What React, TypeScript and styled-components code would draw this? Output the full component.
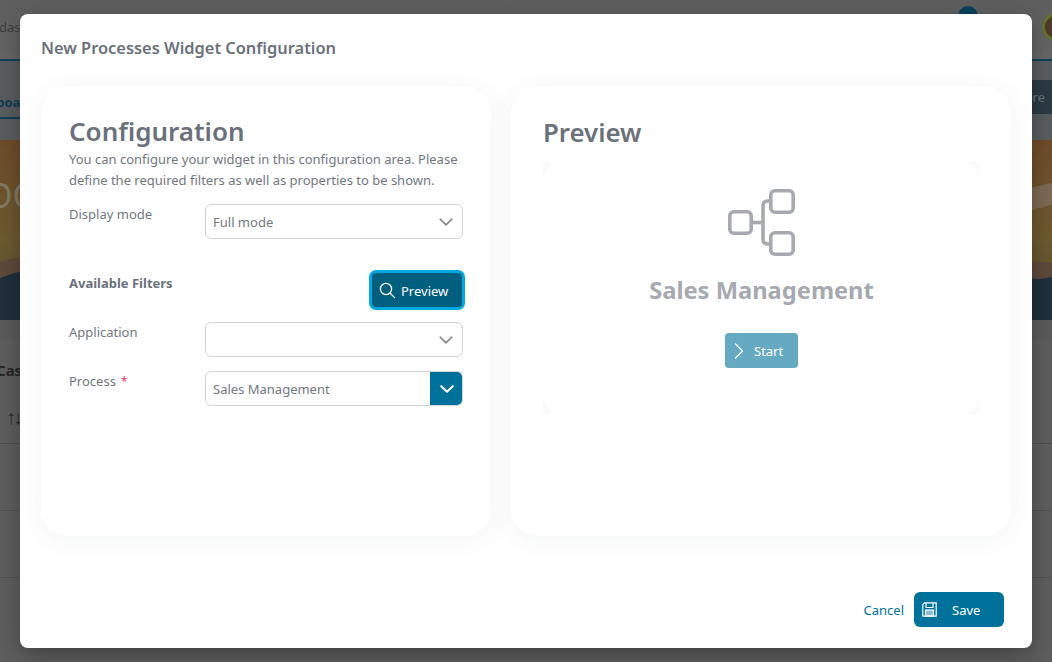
import React from 'react';
import styled, { createGlobalStyle } from 'styled-components';

const GlobalStyle = createGlobalStyle`
  html, body {
    margin: 0;
    padding: 0;
    height: 100%;
    overflow: hidden;
    font-family: "Noto Sans", "Open Sans", sans-serif;
  }
  * { box-sizing: border-box; }
`;

const Screen = styled.div`
  position: relative;
  width: 1052px;
  height: 662px;
  overflow: hidden;
  background: #5b5b5b;
`;

/* page behind the dialog */
const Page = styled.div`
  display: flex;
  flex-direction: column;
  height: 100%;
`;

const TopBar = styled.div`
  display: flex;
  align-items: center;
  justify-content: space-between;
  height: 61px;
  padding-bottom: 6px;
  background: linear-gradient(to bottom, #5e5e5e, #666);
  border-bottom: 2px solid #0d4256;
  overflow: hidden;
`;

const Crumb = styled.span`
  margin-left: -1px;
  font-size: 13px;
  color: #3e3e3e;
`;

const TopRight = styled.div`
  display: flex;
  align-items: center;
  gap: 64px;
  margin-right: -18px;
`;

const Badge = styled.span`
  width: 20px;
  height: 20px;
  margin-bottom: 22px;
  border-radius: 50%;
  background: #0a4258;
`;

const Avatar = styled.span`
  width: 28px;
  height: 28px;
  border-radius: 50%;
  border: 3px solid #66702c;
  background: #4f3a2c;
`;

const TabRow = styled.div`
  display: flex;
  align-items: center;
  justify-content: space-between;
  height: 79px;
  background: #5a5d5f;
  padding-top: 3px;
`;

const ActiveTab = styled.span`
  margin-left: -36px;
  padding: 8px 0 6px;
  border-bottom: 2px solid #0d4256;
  font-size: 13px;
  font-weight: 700;
  color: #0f3f52;
`;

const MoreButton = styled.span`
  display: flex;
  align-items: center;
  height: 34px;
  padding: 0 7px 0 12px;
  margin-top: -10px;
  background: #2b3a43;
  font-size: 13px;
  color: #6d7679;
`;

const Banner = styled.div`
  position: relative;
  height: 180px;
  background: linear-gradient(to bottom, #6f4c2a 0%, #6d5a30 55%, #63542f 75%);
  overflow: hidden;
`;

const BannerArt = styled.svg`
  display: block;
  width: 100%;
  height: 100%;
`;

const BannerTitle = styled.span`
  position: absolute;
  left: -14px;
  top: 32px;
  font-size: 34px;
  color: #827a63;
`;

const CaseArea = styled.div`
  flex: 1;
  margin-top: 20px;
  background: #5e5e5e;
  display: flex;
  flex-direction: column;
`;

const CaseTitle = styled.div`
  height: 62px;
  padding-top: 20px;
  margin-left: -4px;
  font-size: 15px;
  font-weight: 700;
  color: #262626;
`;

const SortRow = styled.div`
  height: 42px;
  padding: 1px 0 0 6px;
  font-size: 20px;
  letter-spacing: -3px;
  color: #2c2c2c;
  border-bottom: 1px solid #4f4f4f;
`;

const BlankRow = styled.div`
  height: 67px;
  border-bottom: 1px solid #535353;
`;

/* dialog */
const Dialog = styled.div`
  position: absolute;
  left: 20px;
  top: 14px;
  width: 1012px;
  height: 634px;
  display: flex;
  flex-direction: column;
  padding: 0 21px;
  background: #fff;
  border-radius: 8px;
  box-shadow: 0 8px 24px rgba(0, 0, 0, 0.3);
`;

const DialogTitle = styled.h1`
  height: 72px;
  margin: 0;
  padding-top: 23px;
  font-size: 16.4px;
  line-height: 22px;
  font-weight: 600;
  color: #6b717b;
`;

const Cards = styled.div`
  display: grid;
  grid-template-columns: 450px 500px;
  column-gap: 20px;
  height: 450px;
`;

const Card = styled.section`
  padding: 28px 28px 0;
  background: #fff;
  border-radius: 28px;
  box-shadow: 0 4px 28px rgba(60, 80, 90, 0.06);
`;

const CardTitle = styled.h2`
  margin: 0;
  font-size: 26px;
  line-height: 35px;
  font-weight: 600;
  color: #6b717b;
`;

const Hint = styled.p`
  margin: 0 0 13px;
  font-size: 13px;
  line-height: 21px;
  color: #72777f;
`;

const FieldRow = styled.div`
  display: grid;
  grid-template-columns: 136px 258px;
  align-items: start;
`;

const FieldLabel = styled.label`
  padding-top: 1px;
  font-size: 13px;
  line-height: 18px;
  color: #72777f;
`;

const Required = styled.span`
  margin-left: 5px;
  font-size: 12px;
  color: #e8386f;
`;

const SelectBox = styled.div`
  display: flex;
  align-items: stretch;
  height: 35px;
  background: #fff;
  border: 1px solid #d3d4d6;
  border-radius: 6px;
  font-size: 13px;
  color: #72777f;
  overflow: hidden;
`;

const SelectValue = styled.span`
  flex: 1;
  padding: 0 7px;
  line-height: 34px;
`;

const SelectArrow = styled.span<{ $filled?: boolean }>`
  display: flex;
  align-items: center;
  justify-content: center;
  width: ${(p) => (p.$filled ? '33px' : '32px')};
  margin: ${(p) => (p.$filled ? '-1px -1px -1px 0' : '0')};
  background: ${(p) => (p.$filled ? '#00719b' : 'transparent')};
  color: ${(p) => (p.$filled ? '#fff' : '#85888e')};
`;

const FilterHead = styled.div`
  display: flex;
  justify-content: space-between;
  align-items: flex-start;
  width: 396px;
  margin: 31px 0 12px;
`;

const FilterTitle = styled.h3`
  margin: 4px 0 0;
  font-size: 13px;
  line-height: 18px;
  font-weight: 700;
  color: #6b717b;
`;

const PreviewButton = styled.button`
  display: flex;
  align-items: center;
  gap: 5px;
  width: 96px;
  height: 40px;
  padding: 1px 0 0 7px;
  background: #005e7f;
  border: 3px solid #00a7e1;
  border-radius: 7px;
  font-family: inherit;
  font-size: 13px;
  color: #fff;
`;

const Stack = styled.div`
  display: flex;
  flex-direction: column;
  gap: 14px;
`;

const PreviewTitle = styled(CardTitle)`
  font-size: 25.8px;
  padding: 1px 0 0 4px;
`;

const PreviewFrame = styled.div`
  width: 437px;
  height: 252px;
  margin: 12px 0 0 4px;
  background: #fafbfb;
  border-radius: 4px;
`;

const WidgetBody = styled.div`
  display: flex;
  flex-direction: column;
  align-items: center;
  height: 100%;
  padding-top: 26px;
  background: #fff;
  border-radius: 18px;
`;

const ProcessIcon = styled.svg`
  width: 67px;
  height: 68px;
  color: #a6a9b0;
`;

const WidgetName = styled.div`
  margin-top: 15px;
  font-size: 23.7px;
  line-height: 38px;
  font-weight: 700;
  color: #a6a9b0;
`;

const StartButton = styled.button`
  display: flex;
  align-items: center;
  gap: 10px;
  width: 73px;
  height: 35px;
  margin-top: 24px;
  padding: 0 0 0 9px;
  background: #66a9c2;
  border: 0;
  border-radius: 4px;
  font-family: inherit;
  font-size: 13px;
  color: #fff;
`;

const Footer = styled.footer`
  display: flex;
  justify-content: flex-end;
  align-items: center;
  gap: 10px;
  margin-top: 56px;
  padding-right: 7px;
`;

const CancelLink = styled.a`
  font-size: 13px;
  color: #00719b;
`;

const SaveButton = styled.button`
  display: flex;
  align-items: center;
  gap: 15px;
  width: 90px;
  height: 35px;
  padding: 0 0 0 8px;
  background: #00719b;
  border: 0;
  border-radius: 6px;
  font-family: inherit;
  font-size: 13px;
  color: #fff;
`;

const Chevron = ({ bold }: { bold?: boolean }) => (
  <svg width="14" height="8" viewBox="0 0 14 8" fill="none" stroke="currentColor" strokeWidth={bold ? 2 : 1.6} strokeLinecap="round" strokeLinejoin="round">
    <path d="M1.2 1.2 7 6.8 12.8 1.2" />
  </svg>
);

const App = () => {
  return (
    <Screen>
      <GlobalStyle />
      <Page>
        <TopBar>
          <Crumb>dashboard</Crumb>
          <TopRight>
            <Badge />
            <Avatar />
          </TopRight>
        </TopBar>
        <TabRow>
          <ActiveTab>Dashboard</ActiveTab>
          <MoreButton>More</MoreButton>
        </TabRow>
        <Banner>
          <BannerArt viewBox="0 0 1052 180" preserveAspectRatio="none">
            <path d="M1020 50 1052 43V65L1020 73Z" fill="#7d6a55" />
            <path d="M0 122Q20 114 60 117L1000 118 1052 123V180H0Z" fill="#5e4a3a" />
            <path d="M0 138Q14 132 30 130L1000 136 1040 139 1052 137V180H0Z" fill="#20303c" />
          </BannerArt>
          <BannerTitle>OOO</BannerTitle>
        </Banner>
        <CaseArea>
          <CaseTitle>Cases</CaseTitle>
          <SortRow>↑↓</SortRow>
          <BlankRow />
          <BlankRow />
        </CaseArea>
      </Page>

      <Dialog>
        <DialogTitle>New Processes Widget Configuration</DialogTitle>
        <Cards>
          <Card>
            <CardTitle>Configuration</CardTitle>
            <Hint>
              You can configure your widget in this configuration area. Please define the required filters as well as properties to be shown.
            </Hint>
            <FieldRow>
              <FieldLabel>Display mode</FieldLabel>
              <SelectBox>
                <SelectValue>Full mode</SelectValue>
                <SelectArrow><Chevron /></SelectArrow>
              </SelectBox>
            </FieldRow>
            <FilterHead>
              <FilterTitle>Available Filters</FilterTitle>
              <PreviewButton>
                <svg width="17" height="17" viewBox="0 0 17 17" fill="none" stroke="currentColor" strokeWidth="1.3" strokeLinecap="round">
                  <circle cx="7" cy="7" r="5.6" />
                  <path d="M11.2 11.2 15.6 15.6" />
                </svg>
                Preview
              </PreviewButton>
            </FilterHead>
            <Stack>
              <FieldRow>
                <FieldLabel>Application</FieldLabel>
                <SelectBox>
                  <SelectValue />
                  <SelectArrow><Chevron /></SelectArrow>
                </SelectBox>
              </FieldRow>
              <FieldRow>
                <FieldLabel>Process<Required>*</Required></FieldLabel>
                <SelectBox>
                  <SelectValue>Sales Management</SelectValue>
                  <SelectArrow $filled><Chevron bold /></SelectArrow>
                </SelectBox>
              </FieldRow>
            </Stack>
          </Card>
          <Card>
            <PreviewTitle>Preview</PreviewTitle>
            <PreviewFrame>
              <WidgetBody>
                <ProcessIcon viewBox="0 0 67 68" fill="none" stroke="currentColor" strokeWidth="3.6">
                  <rect x="1.8" y="23.8" width="21.4" height="21.4" rx="4" />
                  <rect x="42.8" y="2.8" width="22.4" height="21.4" rx="4" />
                  <rect x="42.8" y="44.8" width="22.4" height="21.4" rx="4" />
                  <path d="M23 34.5H35" />
                  <path d="M42.8 13H40Q35 13 35 18V51Q35 56 40 56H42.8" />
                </ProcessIcon>
                <WidgetName>Sales Management</WidgetName>
                <StartButton>
                  <svg width="10" height="16" viewBox="0 0 10 16" fill="none" stroke="currentColor" strokeWidth="1.2" strokeLinecap="round" strokeLinejoin="round">
                    <path d="M1.5 1 8.5 8 1.5 15" />
                  </svg>
                  Start
                </StartButton>
              </WidgetBody>
            </PreviewFrame>
          </Card>
        </Cards>
        <Footer>
          <CancelLink>Cancel</CancelLink>
          <SaveButton>
            <svg width="15" height="15" viewBox="0 0 15 15" fill="none" stroke="currentColor" strokeWidth="1.2" strokeLinejoin="miter">
              <path d="M2.5 .8H14.2V14.2H.8V2.5Z" />
              <path d="M4 1V5.5H11V1" />
              <rect x="3.5" y="8" width="8" height="6" fill="currentColor" fillOpacity="0.55" />
            </svg>
            Save
          </SaveButton>
        </Footer>
      </Dialog>
    </Screen>
  );
};

export default App;
